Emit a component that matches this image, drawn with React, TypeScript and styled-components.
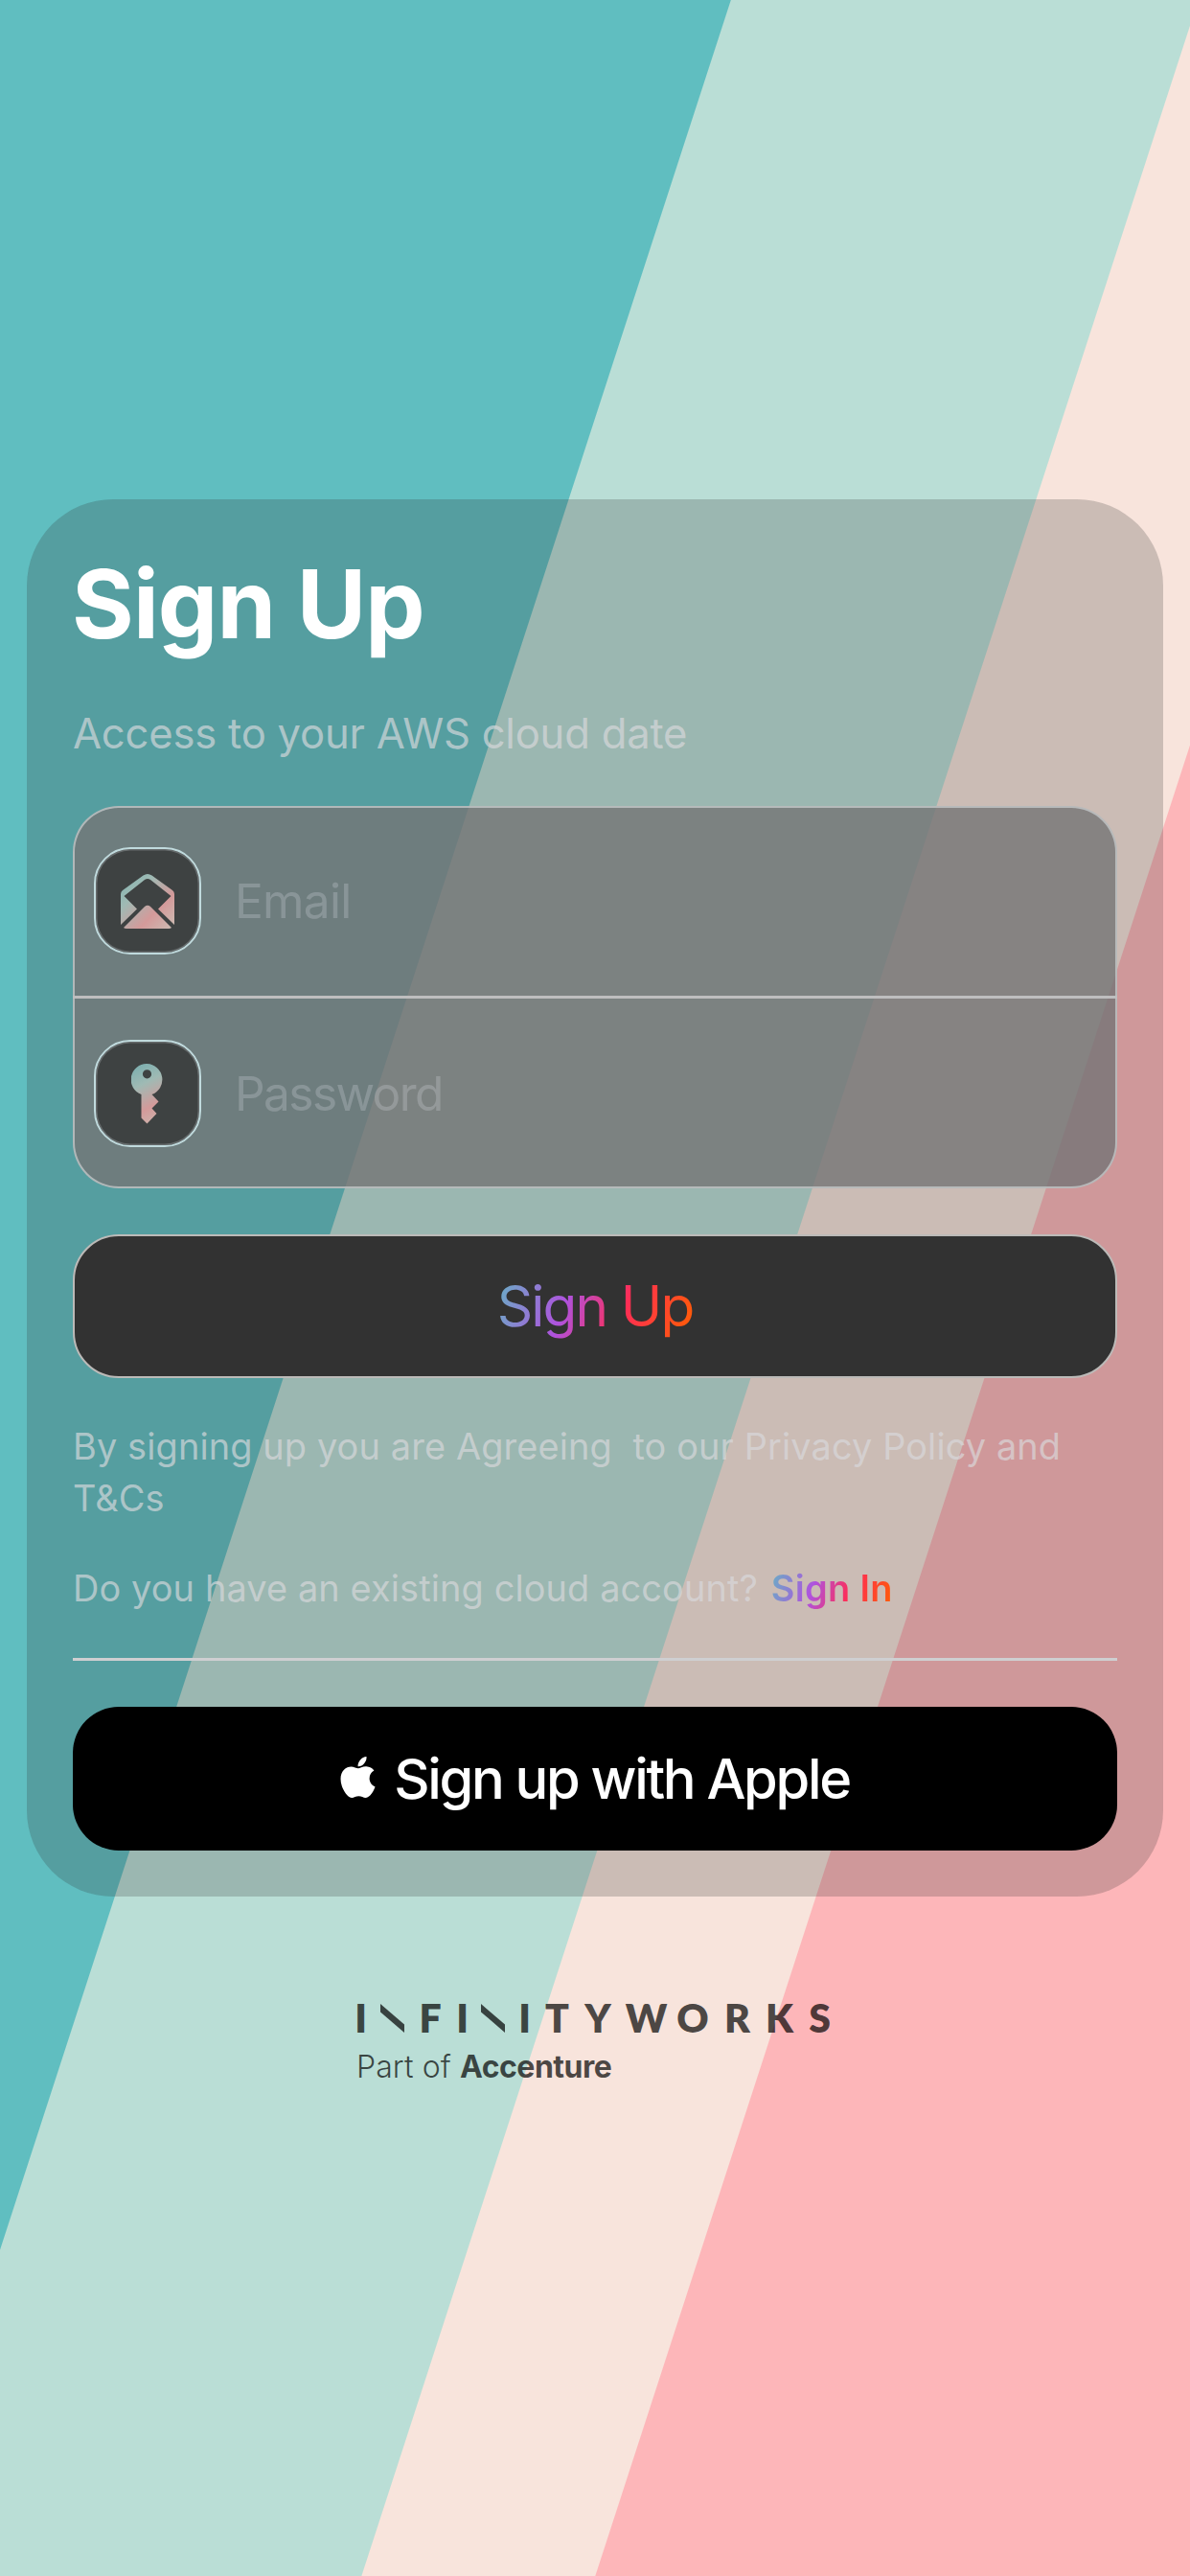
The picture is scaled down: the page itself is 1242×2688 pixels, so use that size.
import React from "react";
import styled, { createGlobalStyle, css } from "styled-components";
import { FaApple } from "react-icons/fa";

const GlobalStyle = createGlobalStyle`
  *, *::before, *::after { box-sizing: border-box; }
  body { margin: 0; font-family: Inter, "Liberation Sans", sans-serif; }
`;

const rainbow = css`
  background: linear-gradient(110deg, #64b4c4 0%, #af52de 36%, #ff2d55 64%, #ff5a0a 96%);
  -webkit-background-clip: text;
  background-clip: text;
  color: transparent;
`;

const Screen = styled.main`
  display: flex;
  flex-direction: column;
  align-items: center;
  width: 1242px;
  height: 2688px;
  padding-top: 521px;
  overflow: hidden;
  background: linear-gradient(
    108deg,
    #60bec0 725px, #baded6 726px,
    #baded6 1189px, #f8e4dc 1190px,
    #f8e4dc 1421px, #fdb6b9 1422px
  );
`;

const Card = styled.section`
  display: flex;
  flex-direction: column;
  width: 1186px;
  height: 1458px;
  padding: 0 48px;
  border-radius: 90px;
  background: rgba(45, 45, 45, 0.22);
`;

const Title = styled.h1`
  margin: 49px 0 0 -1px;
  font-size: 99px;
  font-weight: 700;
  line-height: 120px;
  letter-spacing: -0.9px;
  color: #fff;
`;

const Subtitle = styled.p`
  margin: 48px 0 0;
  font-size: 43.6px;
  line-height: 56px;
  letter-spacing: -0.22px;
  white-space: nowrap;
  color: rgba(218, 218, 221, 0.67);
`;

const Fields = styled.div`
  display: flex;
  flex-direction: column;
  height: 399px;
  margin: 47px 0 48px;
  border: 2px solid rgba(200, 204, 206, 0.75);
  border-radius: 48px;
  background: rgba(116, 116, 117, 0.8);
`;

const Field = styled.label`
  display: flex;
  flex: 1;
  align-items: center;
  gap: 35px;
  padding: 0 0 2px 20px;

  &:last-child { padding: 2px 0 0 20px; }
`;

const Divider = styled.div`
  flex: none;
  height: 3px;
  margin: 0 -2px;
  background: #bebebf;
`;

const IconTile = styled.span`
  display: flex;
  align-items: center;
  justify-content: center;
  width: 112px;
  height: 112px;
  border: 2px solid #c0dadd;
  border-radius: 38px;
  background: #3e4242;
  box-shadow: inset 0 0 0 1.5px #666b6c;
`;

const Input = styled.input<{ $spacing: number }>`
  flex: 1;
  min-width: 0;
  padding: 0;
  border: 0;
  outline: 0;
  background: none;
  font: 400 49.6px/60px Inter, "Liberation Sans", sans-serif;
  letter-spacing: ${(p) => p.$spacing}px;
  &::placeholder { color: rgba(235, 235, 245, 0.22); opacity: 1; }
`;

const Button = styled.button<{ $solid?: boolean }>`
  display: flex;
  flex: none;
  align-items: center;
  justify-content: center;
  height: 150px;
  padding: 0;
  border: ${(p) => (p.$solid ? "0" : "2px solid #bcbab8")};
  border-radius: 48px;
  background: ${(p) => (p.$solid ? "#000" : "#323232")};
  color: #fff;
  font-family: inherit;
`;

const SignUpLabel = styled.span`
  ${rainbow}
  font-size: 58.5px;
  line-height: 72px;
  letter-spacing: -1.9px;
`;

const AppleLabel = styled.span`
  font-size: 57.8px;
  font-weight: 500;
  line-height: 72px;
  letter-spacing: -2.3px;
`;

const AppleMark = styled(FaApple)`
  width: 37px;
  height: 49px;
  margin: 0 19px 3px 0;
`;

const Note = styled.p<{ $top: number }>`
  margin: ${(p) => p.$top}px 0 0;
  font-size: 37.9px;
  line-height: 54px;
  letter-spacing: 0.12px;
  white-space: pre-wrap;
  color: rgba(218, 218, 221, 0.67);
`;

const SignInLink = styled.a`
  ${rainbow}
  margin-left: 3px;
  font-weight: 600;
  letter-spacing: 0.35px;
`;

const Rule = styled.hr`
  flex: none;
  width: 100%;
  height: 3px;
  margin: 46px 0 48px;
  border: 0;
  background: #cfcfd1;
`;

const Brand = styled.footer`
  display: flex;
  flex-direction: column;
  width: 494px;
  margin: 112px 0 0 -2px;
  color: rgba(0, 0, 0, 0.7);
`;

const Wordmark = styled.div`
  display: flex;
  height: 30px;
`;

const Letter = styled.span<{ $width: number; $gap: number }>`
  display: flex;
  flex: none;
  justify-content: center;
  width: ${(p) => p.$width}px;
  margin-left: ${(p) => p.$gap}px;
  font: 800 41px/30px Lato, "Liberation Sans", sans-serif;
`;

const Slash = styled.span<{ $gap: number }>`
  flex: none;
  width: 25px;
  height: 30px;
  margin-left: ${(p) => p.$gap}px;
  background: currentColor;
  clip-path: polygon(0 0, 100% 72%, 100% 100%, 0 28%);
`;

const Tagline = styled.div`
  margin: 16px 0 0 -1px;
  font-size: 32px;
  font-weight: 300;
  line-height: 40px;
  letter-spacing: 0.1px;
  strong { font-weight: 700; letter-spacing: -0.5px; }
`;

const EnvelopeIcon = () => (
  <svg width="56" height="57" viewBox="0 0 56 57" aria-hidden="true">
    <defs>
      <linearGradient id="mail" x1="0" y1="8" x2="50" y2="58" gradientUnits="userSpaceOnUse">
        <stop offset="0" stopColor="#87b5b1" />
        <stop offset=".28" stopColor="#9fbab4" />
        <stop offset=".68" stopColor="#d49a9a" />
        <stop offset="1" stopColor="#cdb9b1" />
      </linearGradient>
    </defs>
    <g fill="url(#mail)">
      <path fillRule="evenodd" d="M0 53V21Q0 18.500 2 17L23.500 1.500Q28 -1.500 32.500 1.500L54 17Q56 18.500 56 21V53L39 36.500L52.500 23L31 6Q28 3.800 25 6L3.500 23L17 36.500Z" />
      <path d="M3 56L25 34Q28 31.500 31 34L53 56Q52 57 50 57H6Q4 57 3 56Z" />
    </g>
  </svg>
);

const KeyIcon = () => (
  <svg width="34" height="63" viewBox="0 0 34 63" aria-hidden="true">
    <defs>
      <linearGradient id="key" x1="4" y1="4" x2="32" y2="60" gradientUnits="userSpaceOnUse">
        <stop offset="0" stopColor="#7fb0b0" />
        <stop offset=".3" stopColor="#9fbab4" />
        <stop offset=".7" stopColor="#d49a9a" />
        <stop offset="1" stopColor="#cdb4ad" />
      </linearGradient>
    </defs>
    <path
      fill="url(#key)"
      fillRule="evenodd"
      d="M16.500 0A16.500 16.500 0 0 1 21.500 32L28.500 39.500L21.500 46.500L26.500 52L16.500 62.500L10.500 56.500V32A16.500 16.500 0 0 1 16.500 0ZM16.500 6.200A4.600 4.600 0 1 0 16.500 15.400A4.600 4.600 0 1 0 16.500 6.200Z"
    />
  </svg>
);

const letters: Array<[string, number, number]> = [
  ["I", 7, 0], ["N", 25, 17], ["F", 22, 16], ["I", 7, 19], ["N", 25, 16],
  ["I", 7, 17], ["T", 25, 18], ["Y", 28, 16], ["W", 43, 15], ["O", 32, 11],
  ["R", 27, 17], ["K", 27, 17], ["S", 23, 17],
];

export default function App() {
  return (
    <>
      <GlobalStyle />
      <Screen>
        <Card>
          <Title>Sign Up</Title>
          <Subtitle>Access to your AWS cloud date</Subtitle>
          <Fields>
            <Field>
              <IconTile><EnvelopeIcon /></IconTile>
              <Input type="email" placeholder="Email" $spacing={-0.7} />
            </Field>
            <Divider />
            <Field>
              <IconTile><KeyIcon /></IconTile>
              <Input type="password" placeholder="Password" $spacing={-1.6} />
            </Field>
          </Fields>
          <Button><SignUpLabel>Sign Up</SignUpLabel></Button>
          <Note $top={44}>{"By signing up you are Agreeing  to our Privacy Policy and T&Cs"}</Note>
          <Note $top={40}>
            Do you have an existing cloud account? <SignInLink>Sign In</SignInLink>
          </Note>
          <Rule />
          <Button $solid>
            <AppleMark />
            <AppleLabel>Sign up with Apple</AppleLabel>
          </Button>
        </Card>
        <Brand>
          <Wordmark>
            {letters.map(([char, width, gap], i) =>
              char === "N" ? (
                <Slash key={i} $gap={gap} />
              ) : (
                <Letter key={i} $width={width} $gap={gap}>{char}</Letter>
              )
            )}
          </Wordmark>
          <Tagline>Part of <strong>Accenture</strong></Tagline>
        </Brand>
      </Screen>
    </>
  );
}
